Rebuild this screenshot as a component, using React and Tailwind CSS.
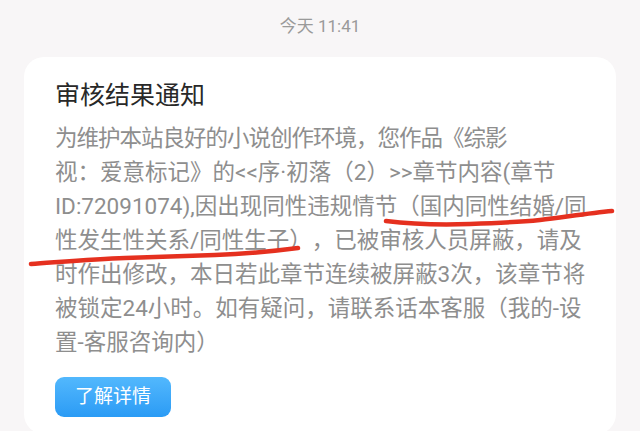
import React from "react";

const lines = [
  "视：爱意标记》的<<序·初落（2）>>章节内容(章节",
  "ID:72091074),因出现同性违规情节（国内同性结婚/同",
  "性发生性关系/同性生子），已被审核人员屏蔽，请及",
  "时作出修改，本日若此章节连续被屏蔽3次，该章节将",
  "被锁定24小时。如有疑问，请联系话本客服（我的-设",
  "置-客服咨询内）",
];

export default function App() {
  return (
    <div
      className="relative h-[431px] w-[640px] overflow-hidden bg-[#f8f6f7]"
      style={{ fontFamily: 'Roboto, "Noto Sans CJK SC", sans-serif' }}
    >
      <div className="pt-[16px] text-center text-[17px] leading-[20px] text-[#9a9a9a]">
        今天 11:41
      </div>
      <div className="mx-[24px] mt-[21px] rounded-[20px] bg-white pl-[31px] pr-[20px] pt-[22px] pb-[17px]">
        <div className="text-[25px] leading-[34px] text-[#282828]">审核结果通知</div>
        <div className="mt-[8px] text-[22.5px] leading-[34px] text-[#8e8e8e] [text-spacing-trim:space-all]">
          <div className="whitespace-nowrap tracking-[-1px]">
            为维护本站良好的小说创作环境，您作品《综影
          </div>
          {lines.map((l, i) => (
            <div key={i} className="whitespace-nowrap">
              {l}
            </div>
          ))}
        </div>
        <div className="mt-[18px] flex h-[40px] w-[116px] items-center justify-center rounded-[9px] bg-gradient-to-b from-[#52b8fd] to-[#2a9bf5] text-[19px] text-white">
          了解详情
        </div>
      </div>
      <svg
        className="pointer-events-none absolute inset-0"
        width="640"
        height="431"
        viewBox="0 0 640 431"
      >
        <path
          d="M386 221 C 410 224, 440 225, 470 224 C 500 223, 520 222, 540 220 C 565 217, 590 213, 612 211"
          fill="none"
          stroke="#e5301f"
          strokeWidth="4.5"
          strokeLinecap="round"
        />
        <path
          d="M31 264 C 60 262, 95 259, 125 258 C 160 257, 190 256, 215 255 C 245 254, 275 251, 298 248"
          fill="none"
          stroke="#e5301f"
          strokeWidth="4.5"
          strokeLinecap="round"
        />
      </svg>
    </div>
  );
}
